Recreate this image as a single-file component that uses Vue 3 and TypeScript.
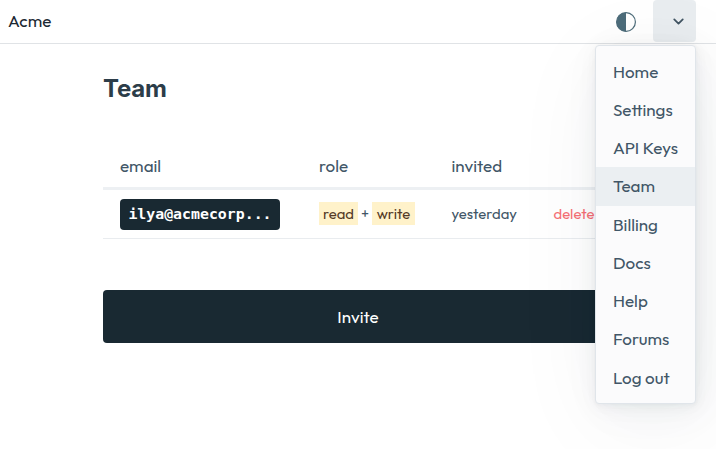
<script setup lang="ts">
import { ref } from 'vue'

const items: string[] = ['Home', 'Settings', 'API Keys', 'Team', 'Billing', 'Docs', 'Help', 'Forums', 'Log out']
const current = ref('Team')
const open = ref(true)
</script>

<template>
  <div class="page">
    <header class="topbar">
      <a class="brand">Acme</a>
      <div class="actions">
        <svg class="theme" viewBox="0 0 20 20" width="20" height="20">
          <circle cx="10" cy="10" r="9.4" fill="none" stroke="#4d6c7a" stroke-width="1.2" />
          <path d="M10 .5a9.5 9.5 0 0 0 0 19z" fill="#4d6c7a" />
        </svg>
        <div class="dropdown">
          <button class="toggle" aria-label="Menu" @click="open = !open">
            <svg viewBox="0 0 24 24" width="17" height="17" fill="none" stroke="#415462" stroke-width="2.5" stroke-linecap="round" stroke-linejoin="round">
              <polyline points="6 9 12 15 18 9" />
            </svg>
          </button>
          <ul v-if="open" class="menu">
            <li v-for="label in items" :key="label" :class="{ active: label === current }">{{ label }}</li>
          </ul>
        </div>
      </div>
    </header>
    <main class="container">
      <h1>Team</h1>
      <div class="row head">
        <span>email</span><span>role</span><span>invited</span><span></span>
      </div>
      <div class="row body">
        <span><code>ilya@acmecorp...</code></span>
        <span class="roles"><mark class="read">read</mark><span class="plus">+</span><mark class="write">write</mark></span>
        <span>yesterday</span>
        <a class="delete">delete</a>
      </div>
      <button class="invite">Invite</button>
    </main>
  </div>
</template>

<style>
body { background: #fff; overflow: hidden; }
</style>

<style scoped>
* { box-sizing: border-box; }
.page { height: 449px; overflow: hidden; font: 380 17px/24px Outfit, Lato, sans-serif; color: #415667; }
.topbar { height: 44px; border-bottom: 1px solid #e0e3e6; display: flex; justify-content: space-between; padding: 0 20px 0 8px; }
.brand { color: #1b2832; line-height: 42px; }
.actions { display: flex; gap: 17px; }
.theme { margin-top: 12px; }
.dropdown { position: relative; z-index: 2; }
.toggle { width: 43px; height: 42px; border: 0; border-radius: 4px; background: #e9edf0; padding: 0 0 0 8px; display: flex; align-items: center; justify-content: center; }
.toggle svg { display: block; }
.menu {
  position: absolute; top: 45px; right: 0; width: 101px; height: 359px; margin: 0; padding: 6.7px 0; list-style: none;
  background: #fbfbfc; border: 1px solid #e0e5ea; border-radius: 4px;
  box-shadow: .246px .493px 2.958px rgba(27,56,70,.017), .57px 1.139px 6.834px rgba(27,56,70,.024),
    1.063px 2.125px 12.75px rgba(27,56,70,.03), 1.913px 3.825px 22.95px rgba(27,56,70,.036),
    3.545px 7.089px 42.53px rgba(27,56,70,.043), 8.5px 17px 102px rgba(27,56,70,.06);
}
.menu li { height: 38.25px; line-height: 38.25px; padding-left: 17px; white-space: nowrap; }
.menu li.active { background: #ebeff2; }
.container { width: 510px; margin: 0 auto; padding-top: 30px; }
h1 { margin: 0; font: 700 24px/30px Inter, sans-serif; letter-spacing: -.2px; color: #2c3d49; }
.row { display: grid; grid-template-columns: 199px 132.5px 102px 1fr; padding-left: 17px; align-items: center; }
.head { margin-top: 41px; height: 45px; border-bottom: 3px solid #edf0f3; }
.body { height: 49px; border-bottom: 1px solid #e9ecef; font-size: 14.875px; }
code { display: block; width: 160px; height: 31px; padding-left: 8.4px; border-radius: 4px; background: #192932; color: #fff; font: 700 14.875px/30px "DejaVu Sans Mono", monospace; white-space: nowrap; }
.roles { display: flex; align-items: center; padding-bottom: 2px; }
.plus { width: 14px; text-align: center; }
mark { height: 23px; line-height: 23px; background: #fff2ca; color: #543a26; text-align: center; }
.read { width: 39px; }
.write { width: 43px; }
.delete { color: #f66f75; }
.invite { display: block; width: 510px; height: 53px; margin-top: 51px; border: 0; border-radius: 4px; background: #192932; color: #fff; font: inherit; }
</style>
